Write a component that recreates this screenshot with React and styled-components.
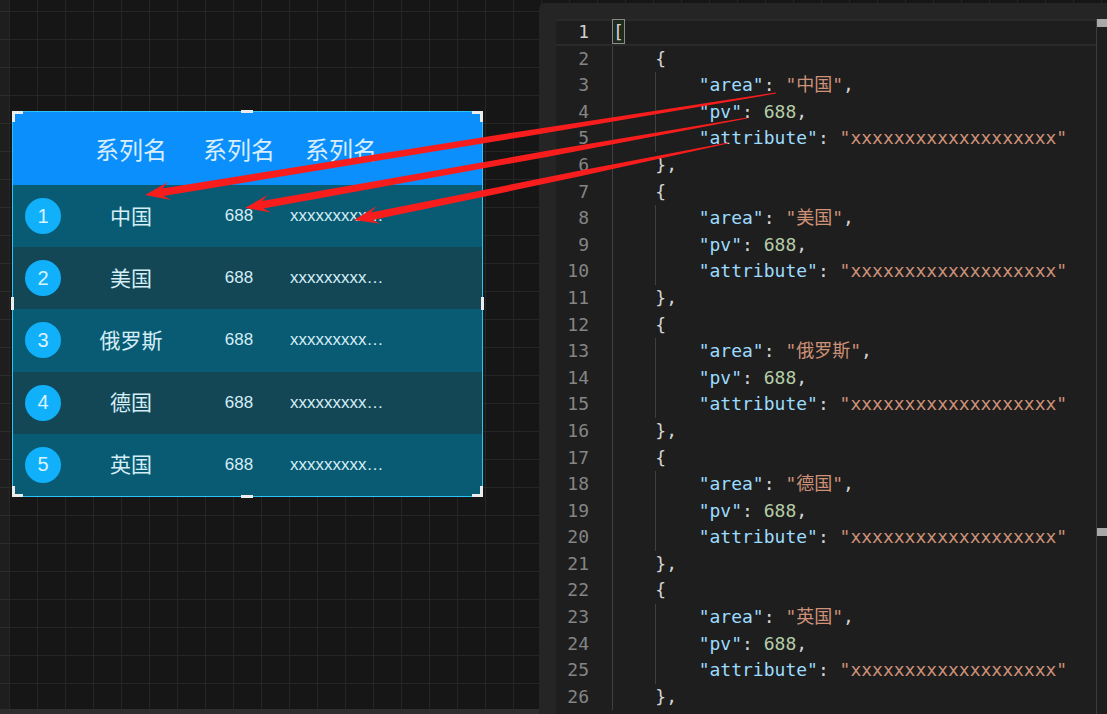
import React from 'react';
import styled, { createGlobalStyle } from 'styled-components';

const GlobalStyle = createGlobalStyle`
  html, body { margin: 0; padding: 0; background: #161616; overflow: hidden; }
  #root { width: 1107px; height: 714px; }
`;

const Page = styled.div`
  position: relative;
  display: flex;
  width: 1107px;
  height: 714px;
  overflow: hidden;
  background-color: #161616;
  background-image:
    linear-gradient(to right, #262626 1px, transparent 1px),
    linear-gradient(to bottom, #262626 1px, transparent 1px);
  background-size: 28px 28px, 28px 28px;
  background-position: 9px 0, 0 11px;
`;

const Canvas = styled.div`
  width: 539px;
  flex: none;
  display: flex;
  flex-direction: column;
  background-image: linear-gradient(to right, rgba(255, 255, 255, 0.035) 9px, transparent 9px);
`;

const Stage = styled.div`
  flex: 1;
  padding: 111px 0 0 12px;
`;

const BottomBar = styled.div`
  height: 5px;
  background: #2d2d2d;
`;

const TableBox = styled.div`
  position: relative;
  width: 471px;
  box-sizing: border-box;
  border: 1px solid #2cc3f5;
  font-family: "Liberation Sans", "Noto Sans CJK SC", sans-serif;
`;

const cols = '60px 116px 100px 104px 1fr';

const Header = styled.div`
  display: grid;
  grid-template-columns: ${cols};
  align-items: center;
  height: 73px;
  background: #0b8ffd;
  color: #d9eefc;
  font-size: 24px;
`;

const HeadCell = styled.div`
  text-align: center;
  white-space: nowrap;
  font-family: "Noto Sans CJK SC", sans-serif;
`;

const Row = styled.div`
  display: grid;
  grid-template-columns: ${cols};
  align-items: center;
  height: 62.2px;
  background: ${p => (p.$odd ? '#095a73' : '#134756')};
  color: #d4eef6;
`;

const BadgeCell = styled.div`
  display: flex;
  justify-content: center;
`;

const Badge = styled.div`
  width: 36px;
  height: 36px;
  border-radius: 50%;
  background: #10b0fa;
  color: #d9f3ff;
  font-size: 20px;
  display: flex;
  align-items: center;
  justify-content: center;
`;

const AreaCell = styled.div`
  text-align: center;
  font-size: 21px;
  line-height: 1.2;
  margin-top: -2px;
  font-family: "Noto Sans CJK SC", sans-serif;
`;

const PvCell = styled.div`
  text-align: center;
  font-size: 17px;
`;

const AttrCell = styled.div`
  padding-left: 1px;
  font-size: 17px;
`;

const Ellipsis = styled.div`
  width: 97px;
  white-space: nowrap;
  overflow: hidden;
  text-overflow: ellipsis;
`;

const Corner = styled.div`
  position: absolute;
  width: 11px;
  height: 11px;
  box-sizing: border-box;
  border: 0 solid #ececec;
  ${p => (p.$v === 't' ? 'top: -1px; border-top-width: 3px;' : 'bottom: -1px; border-bottom-width: 3px;')}
  ${p => (p.$h === 'l' ? 'left: -1px; border-left-width: 3px;' : 'right: -1px; border-right-width: 3px;')}
`;

const MidH = styled.div`
  position: absolute;
  left: 228px;
  width: 12px;
  height: 3px;
  background: #ececec;
  ${p => (p.$side === 't' ? 'top: -2px;' : 'bottom: -2px;')}
`;

const MidV = styled.div`
  position: absolute;
  top: 185px;
  width: 3px;
  height: 13px;
  background: #ececec;
  ${p => (p.$side === 'l' ? 'left: -2px;' : 'right: -2px;')}
`;

const EditorPanel = styled.div`
  flex: 1;
  margin-top: 3px;
  background: #252526;
  border-top-left-radius: 6px;
  padding: 16px 0 0 17px;
  display: flex;
`;

const Editor = styled.div`
  flex: 1;
  display: flex;
  background: #1e1e1e;
  font-family: "DejaVu Sans Mono", "Noto Sans CJK SC", monospace;
  font-size: 18px;
`;

const Lines = styled.div`
  flex: 1;
`;

const Line = styled.div`
  display: flex;
  height: 26.6px;
  line-height: 26.6px;
  box-shadow: ${p => (p.$active ? 'inset 0 2px 0 #2a2a2a, inset 0 -2px 0 #2a2a2a' : 'none')};
`;

const LineNo = styled.div`
  width: 33px;
  margin-right: 23px;
  text-align: right;
  color: ${p => (p.$active ? '#d0d0d0' : '#858585')};
`;

const Code = styled.div`
  display: flex;
  white-space: pre;
`;

const Indent = styled.span`
  display: block;
  width: 4ch;
  box-shadow: inset 1px 0 0 #404040;
`;

const Tok = styled.span`
  color: ${p => p.$c};
`;

const Bracket = styled.span`
  color: #d4d4d4;
  box-sizing: border-box;
  display: inline-block;
  height: 25px;
  line-height: 23px;
  border: 1px solid #8a8a8a;
  background: #1f2a1f;
`;

const Track = styled.div`
  width: 10px;
  border-left: 1px solid #3c3c3c;
`;

const Mark = styled.div`
  height: 8px;
  margin-top: ${p => p.$top}px;
  background: #a9a9a9;
`;

const ArrowLayer = styled.svg`
  position: absolute;
  left: 0;
  top: 0;
  pointer-events: none;
`;

const rows = [
  { n: 1, area: '中国' },
  { n: 2, area: '美国' },
  { n: 3, area: '俄罗斯' },
  { n: 4, area: '德国' },
  { n: 5, area: '英国' },
];

const C = { key: '#9cdcfe', str: '#ce9178', num: '#b5cea8', p: '#d4d4d4' };

function buildLines() {
  const out = [{ indent: 0, bracket: true }];
  rows.forEach(r => {
    out.push({ indent: 1, toks: [['{', C.p]] });
    out.push({ indent: 2, toks: [['"area"', C.key], [': ', C.p], [`"${r.area}"`, C.str], [',', C.p]] });
    out.push({ indent: 2, toks: [['"pv"', C.key], [': ', C.p], ['688', C.num], [',', C.p]] });
    out.push({ indent: 2, toks: [['"attribute"', C.key], [': ', C.p], ['"xxxxxxxxxxxxxxxxxxx"', C.str]] });
    out.push({ indent: 1, toks: [['},', C.p]] });
  });
  return out.slice(0, 26);
}

const codeLines = buildLines();

function arrowPoints([tx, ty], [hx, hy]) {
  const dx = hx - tx;
  const dy = hy - ty;
  const L = Math.hypot(dx, dy);
  const ux = dx / L;
  const uy = dy / L;
  const nx = -uy;
  const ny = ux;
  const p = (d, w) => [tx + ux * d + nx * w, ty + uy * d + ny * w];
  const pts = [
    p(0, 0.6), p(L * 0.4, 2.9), p(L - 18, 3.8), p(L - 25, 9), p(L, 0),
    p(L - 25, -9), p(L - 18, -3.8), p(L * 0.4, -2.9), p(0, -0.6),
  ];
  return pts.map(q => q.map(v => v.toFixed(1)).join(',')).join(' ');
}

const arrows = [
  [[776, 93], [145, 195]],
  [[747, 118], [245, 208]],
  [[728, 143], [354, 220]],
];

export default function App() {
  return (
    <>
      <GlobalStyle />
      <Page>
        <Canvas>
          <Stage>
            <TableBox>
              <Header>
                <span />
                <HeadCell>系列名</HeadCell>
                <HeadCell>系列名</HeadCell>
                <HeadCell>系列名</HeadCell>
              </Header>
              {rows.map((r, i) => (
                <Row key={r.n} $odd={i % 2 === 0}>
                  <BadgeCell><Badge>{r.n}</Badge></BadgeCell>
                  <AreaCell>{r.area}</AreaCell>
                  <PvCell>688</PvCell>
                  <AttrCell><Ellipsis>xxxxxxxxxxxxxxxxxxx</Ellipsis></AttrCell>
                </Row>
              ))}
              <Corner $v="t" $h="l" />
              <Corner $v="t" $h="r" />
              <Corner $v="b" $h="l" />
              <Corner $v="b" $h="r" />
              <MidH $side="t" />
              <MidH $side="b" />
              <MidV $side="l" />
              <MidV $side="r" />
            </TableBox>
          </Stage>
          <BottomBar />
        </Canvas>
        <EditorPanel>
          <Editor>
            <Lines>
              {codeLines.map((l, i) => (
                <Line key={i} $active={i === 0}>
                  <LineNo $active={i === 0}>{i + 1}</LineNo>
                  <Code>
                    {Array.from({ length: l.indent }).map((_, k) => <Indent key={k} />)}
                    {l.bracket ? <Bracket>[</Bracket> : l.toks.map((t, k) => <Tok key={k} $c={t[1]}>{t[0]}</Tok>)}
                  </Code>
                </Line>
              ))}
            </Lines>
            <Track>
              <Mark $top={0} />
              <Mark $top={501} />
            </Track>
          </Editor>
        </EditorPanel>
        <ArrowLayer width="1107" height="714" viewBox="0 0 1107 714">
          {arrows.map((a, i) => (
            <polygon key={i} points={arrowPoints(a[0], a[1])} fill="#f81d1d" />
          ))}
        </ArrowLayer>
      </Page>
    </>
  );
}
